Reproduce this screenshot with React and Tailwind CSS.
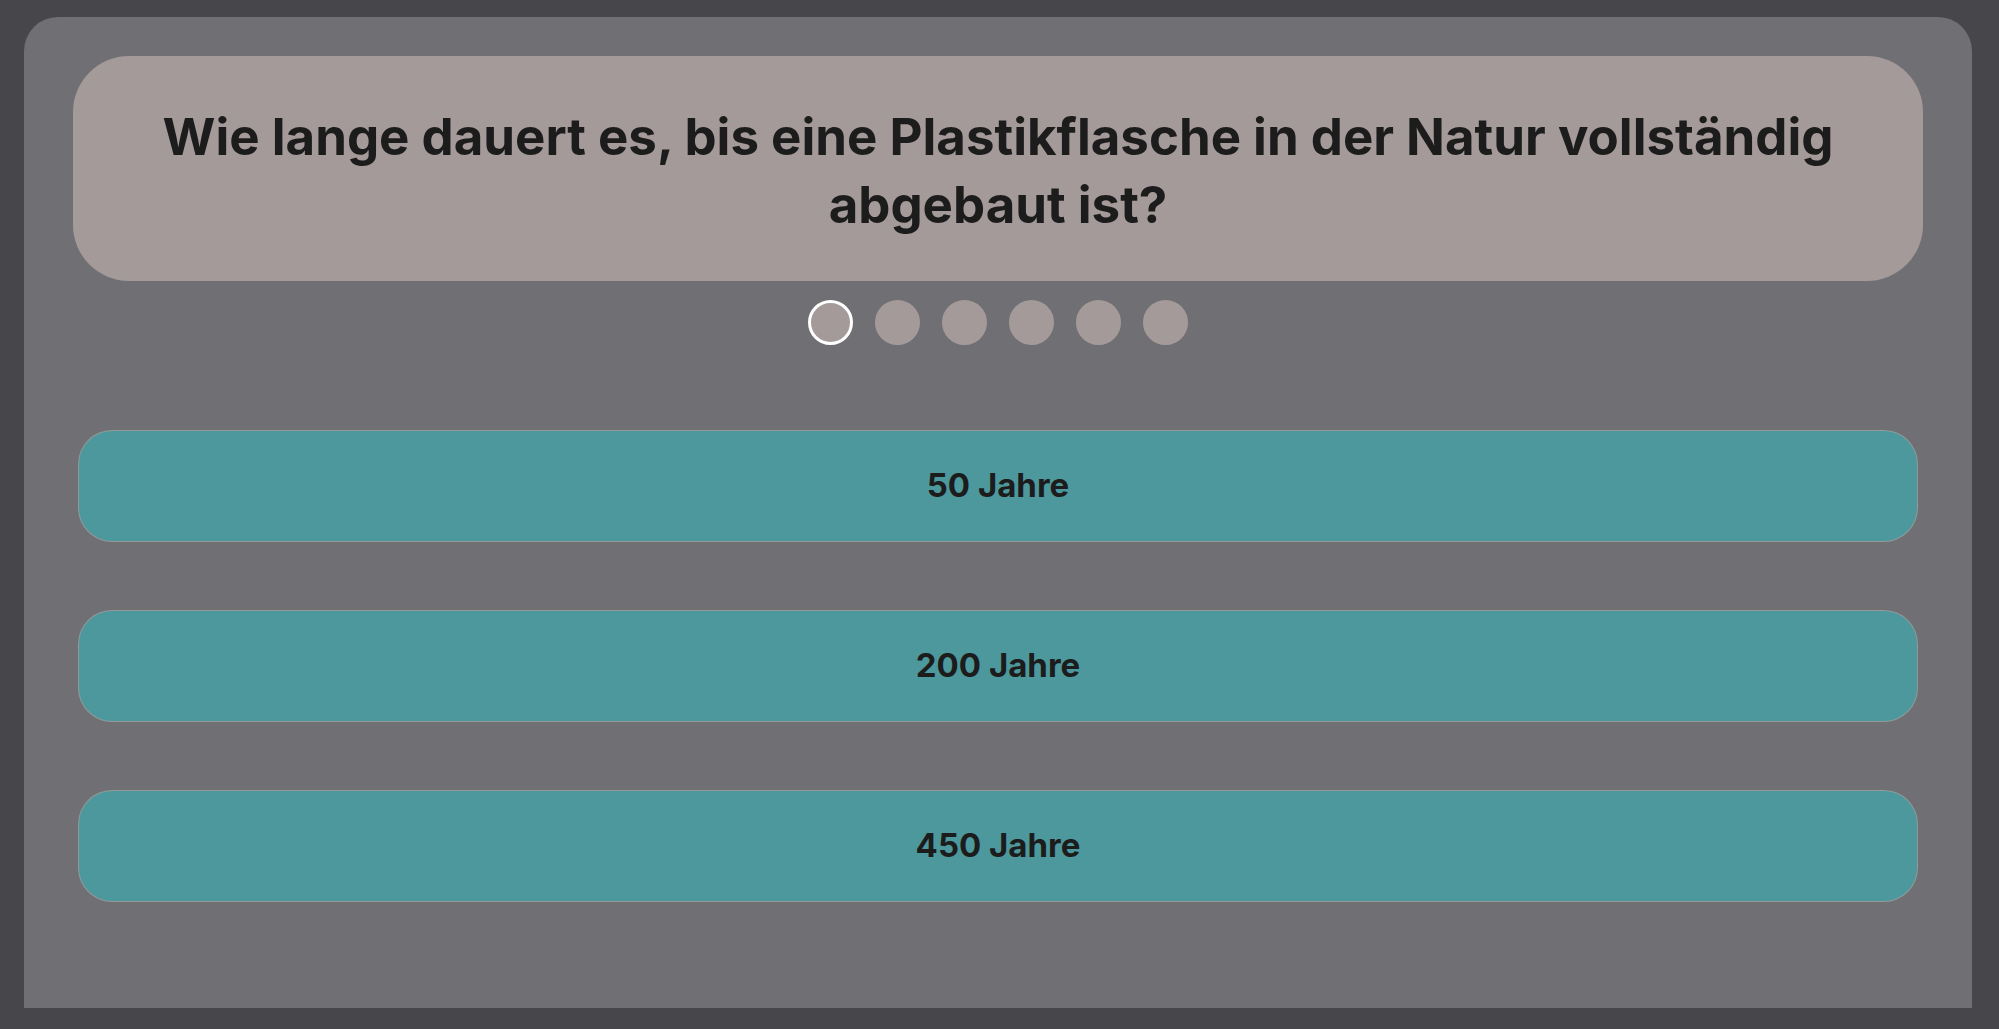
const answers = ['50 Jahre', '200 Jahre', '450 Jahre'];
const questions = [1, 2, 3, 4, 5, 6];

export default function App() {
  return (
    <div className="min-h-screen bg-[#47464b] pt-[17px] pr-[27px] pb-[21px] pl-6 font-[Inter,sans-serif] font-bold text-[#1c1c1c]">
      <main className="rounded-t-[34px] bg-[#706f74] px-[49px] pt-[39px] pb-[106px]">
        <h1 className="flex min-h-[225px] items-center justify-center rounded-[56px] bg-[#a49a99] px-20 pt-1 text-center text-[51px] leading-[68px]">
          Wie lange dauert es, bis eine Plastikflasche in der Natur vollständig abgebaut ist?
        </h1>
        <ol aria-label="Fragen" className="mt-[19px] flex justify-center gap-[22px]">
          {questions.map((n) => (
            <li
              key={n}
              aria-current={n === 1 ? 'step' : undefined}
              className="size-[45px] rounded-full border-3 border-[#a49a99] bg-[#a49a99] aria-[current=step]:border-white"
            />
          ))}
        </ol>
        <div className="mt-[85px] flex flex-col gap-[68px] px-[5px]">
          {answers.map((a) => (
            <button key={a} type="button" className="h-28 rounded-[34px] border border-[#a49a99]/80 bg-[#4d989c] text-[33px]">
              {a}
            </button>
          ))}
        </div>
      </main>
    </div>
  );
}
